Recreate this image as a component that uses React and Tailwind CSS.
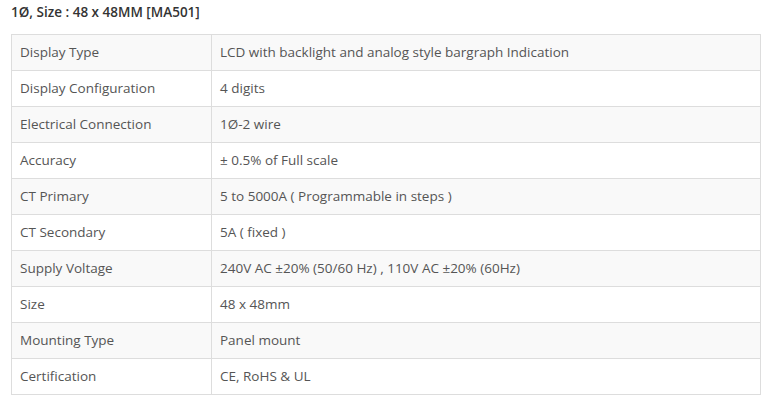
import React from "react";

const specs = [
  ["Display Type", "LCD with backlight and analog style bargraph Indication"],
  ["Display Configuration", "4 digits"],
  ["Electrical Connection", "1Ø-2 wire"],
  ["Accuracy", "± 0.5% of Full scale"],
  ["CT Primary", "5 to 5000A ( Programmable in steps )"],
  ["CT Secondary", "5A ( fixed )"],
  ["Supply Voltage", "240V AC ±20% (50/60 Hz) , 110V AC ±20% (60Hz)"],
  ["Size", "48 x 48mm"],
  ["Mounting Type", "Panel mount"],
  ["Certification", "CE, RoHS & UL"],
];

const App = () => {
  return (
    <div className="bg-white px-[11px] pt-[3px] font-['Open_Sans',sans-serif] text-[13.5px] text-[#555]">
      <h4 className="mb-[13px] text-[13.5px] leading-[18px] font-semibold text-[#333]">
        1Ø, Size : 48 x 48MM [MA501]
      </h4>
      <table className="w-[750px] border-collapse border border-[#ddd]">
        <tbody>
          {specs.map(([label, value], i) => (
            <tr key={label} className={i % 2 === 0 ? "bg-[#f9f9f9]" : "bg-white"}>
              <td className="w-[200px] h-[36px] border border-[#ddd] px-2 pb-[2px] leading-5">
                {label}
              </td>
              <td className="h-[36px] border border-[#ddd] px-2 pb-[2px] leading-5">{value}</td>
            </tr>
          ))}
        </tbody>
      </table>
    </div>
  );
};

export default App;
